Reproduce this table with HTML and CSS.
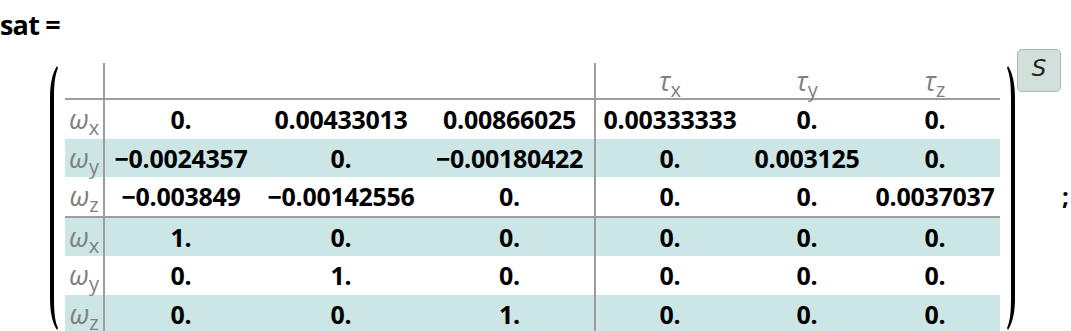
FILE: index.html
```html
<!DOCTYPE html>
<html>
<head>
<meta charset="utf-8">
<link rel="stylesheet" href="styles.css">
</head>
<body>
<div class="title">sat =</div>
<div class="row">
  <div class="matrix">
    <svg class="paren" width="12" height="264" viewBox="0 0 12 264"><path d="M9 0 C5 6 2 16 2 32 L2 232 C2 248 5 258 9 264 L10 262 C7 256 6 246 6 232 L6 32 C6 18 7 9 10 2 Z" fill="#000"/></svg>
    <table class="grid">
      <colgroup>
        <col class="c-lab"><col class="c1"><col class="c2"><col class="c3"><col class="c4"><col class="c5"><col class="c6">
      </colgroup>
      <tr class="head">
        <td class="lab"></td><td></td><td></td><td class="sep"></td>
        <td class="sym"><i>τ</i><sub>x</sub></td>
        <td class="sym"><i>τ</i><sub>y</sub></td>
        <td class="sym"><i>τ</i><sub>z</sub></td>
      </tr>
      <tr>
        <td class="lab"><i>ω</i><sub>x</sub></td><td>0.</td><td>0.00433013</td><td class="sep">0.00866025</td><td>0.00333333</td><td>0.</td><td>0.</td>
      </tr>
      <tr class="shade">
        <td class="lab"><i>ω</i><sub>y</sub></td><td>−0.0024357</td><td>0.</td><td class="sep">−0.00180422</td><td>0.</td><td>0.003125</td><td>0.</td>
      </tr>
      <tr class="block-end">
        <td class="lab"><i>ω</i><sub>z</sub></td><td>−0.003849</td><td>−0.00142556</td><td class="sep">0.</td><td>0.</td><td>0.</td><td>0.0037037</td>
      </tr>
      <tr class="shade">
        <td class="lab"><i>ω</i><sub>x</sub></td><td>1.</td><td>0.</td><td class="sep">0.</td><td>0.</td><td>0.</td><td>0.</td>
      </tr>
      <tr>
        <td class="lab"><i>ω</i><sub>y</sub></td><td>0.</td><td>1.</td><td class="sep">0.</td><td>0.</td><td>0.</td><td>0.</td>
      </tr>
      <tr class="shade">
        <td class="lab"><i>ω</i><sub>z</sub></td><td>0.</td><td>0.</td><td class="sep">1.</td><td>0.</td><td>0.</td><td>0.</td>
      </tr>
    </table>
    <svg class="paren" width="12" height="264" viewBox="0 0 12 264"><path d="M3 0 C7 6 10 16 10 32 L10 232 C10 248 7 258 3 264 L2 262 C5 256 6 246 6 232 L6 32 C6 18 5 9 2 2 Z" fill="#000"/></svg>
  </div>
  <div class="btn"><span>S</span></div>
  <div class="semi">;</div>
</div>
</body>
</html>
```

FILE: styles.css
```css
html, body {
  margin: 0;
  padding: 0;
  background: #fff;
}
body {
  font-family: "Open Sans", "Noto Sans", sans-serif;
  color: #000;
  width: 1071px;
  height: 331px;
  overflow: hidden;
}
.title {
  height: 49px;
  padding-top: 8px;
  box-sizing: border-box;
  font-size: 27px;
  font-weight: 700;
  line-height: 34px;
  letter-spacing: -0.8px;
}
.row {
  display: flex;
  align-items: flex-start;
}
.matrix {
  display: flex;
  align-items: stretch;
  margin-top: 14px;
  margin-left: 48px;
}
.paren {
  display: block;
  margin-top: 3px;
}
.matrix .grid {
  margin: 0 5px;
}
.grid {
  border-collapse: separate;
  border-spacing: 0;
  table-layout: fixed;
  width: 935px;
}
.c-lab { width: 40px; }
.c1 { width: 152px; }
.c2 { width: 168px; }
.c3 { width: 171px; }
.c4 { width: 148px; }
.c5 { width: 126px; }
.c6 { width: 130px; }
.grid td {
  box-sizing: border-box;
  padding: 0;
  height: 38.5px;
  text-align: center;
  vertical-align: middle;
  font-size: 25px;
  font-weight: 700;
  white-space: nowrap;
  line-height: 30px;
  letter-spacing: -0.3px;
}
.grid .head td {
  height: 37px;
  border-bottom: 2px solid #9d9d9d;
}
.grid .block-end td {
  height: 40.5px;
  border-bottom: 2px solid #9d9d9d;
}
.grid td.lab {
  border-right: 2px solid #9d9d9d;
  color: #808080;
  font-weight: 400;
  text-align: center;
  font-size: 27px;
  letter-spacing: 0;
}
.grid td.sep {
  border-right: 2px solid #9d9d9d;
}
.grid td.sym {
  color: #808080;
  font-weight: 400;
  font-size: 27px;
  letter-spacing: 0;
}
.grid i {
  font-style: italic;
}
.grid sub {
  font-size: 20px;
  vertical-align: -6px;
  line-height: 0;
  font-style: normal;
}
.grid .shade td {
  background: #cce5e5;
}
.btn {
  width: 44px;
  height: 43px;
  box-sizing: border-box;
  border: 1px solid #a3bbb5;
  border-radius: 5px;
  background: #d2e0dc;
  display: flex;
  align-items: center;
  justify-content: center;
  padding-bottom: 6px;
}
.btn span {
  font-family: "DejaVu Sans", sans-serif;
  font-style: italic;
  font-size: 23px;
  line-height: 28px;
  color: #222;
}
.semi {
  margin-top: 132px;
  margin-left: 1px;
  font-size: 24px;
  font-weight: 700;
  line-height: 30px;
}
```
